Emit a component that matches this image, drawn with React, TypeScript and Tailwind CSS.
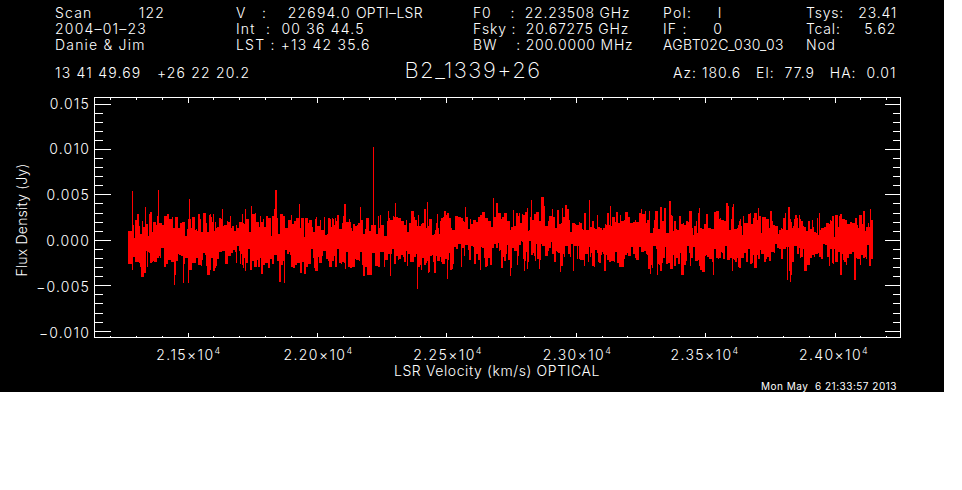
import type { ReactNode } from 'react';

const rows: ReactNode[][] = [
  [
    'Scan         122',
    <>
      V   :    22694.0 <span className="tracking-[0.3px]">OPTI–LSR</span>
    </>,
    'F0    :  22.23508 GHz',
    'Pol:     I',
    'Tsys:   23.41',
  ],
  ['2004–01–23', 'Int  :  00 36 44.5', 'Fsky :  20.67275 GHz', 'IF :     0', 'Tcal:     5.62'],
  ['Danie & Jim', 'LST : +13 42 35.6', 'BW    : 200.0000 MHz', <span className="tracking-[0.3px]">AGBT02C_030_03</span>, 'Nod'],
];

const colClasses = ['w-[181px]', 'w-[237px]', 'w-[190px] tracking-[0.8px]', 'w-[143px]', 'w-[100px] tracking-[0.8px]'];

// seeded so every render draws the same noise
const mulberry = (seed: number) => () => {
  seed = (seed + 0x6d2b79f5) | 0;
  let t = Math.imul(seed ^ (seed >>> 15), 1 | seed);
  t = (t + Math.imul(t ^ (t >>> 7), 61 | t)) ^ t;
  return ((t ^ (t >>> 14)) >>> 0) / 4294967296;
};

const upSpikes: Record<number, number> = {
  132: 191, 158: 190, 189: 199, 275: 190, 276: 190, 373: 147, 395: 203, 427: 202, 493: 198, 531: 200,
  145: 207, 222: 209, 251: 206, 299: 204, 465: 207, 610: 206, 733: 204, 870: 209,
};
const downSpikes: Record<number, number> = {
  174: 285, 183: 283, 188: 283, 284: 283, 417: 289, 447: 279, 510: 276, 650: 274, 790: 282, 787: 280, 713: 275, 560: 272,
};

const centerAt = (x: number) =>
  240 + 1.5 * Math.sin(x / 47) - 2.5 * Math.sin((x - 420) / 130) + 0.8 * Math.sin(x / 13);

const buildSpectrum = () => {
  const rand = mulberry(1339);
  const gauss = () => (rand() + rand() + rand() + rand() - 2) * 1.7;
  let d = '';
  let upper = 18;
  let lower = 18;
  let holdU = 0;
  let holdL = 0;
  for (let x = 128; x <= 872; x++) {
    const c = centerAt(x);
    // teeth stay 1-3 px wide, like the channels in the original trace
    if (holdU-- <= 0) {
      upper = Math.max(4, 20 + gauss() * 7);
      if (rand() < 0.08) upper = 5 + rand() * 6;
      holdU = Math.floor(rand() * 2.5);
    }
    if (holdL-- <= 0) {
      lower = Math.max(4, 21 + gauss() * 7);
      if (rand() < 0.08) lower = 5 + rand() * 6;
      holdL = Math.floor(rand() * 2.5);
    }
    let top = c - upper;
    let bottom = c + lower;
    if (x < 132) {
      top = c - 11;
      bottom = c + 22;
    }
    if (x > 800 && x < 840) {
      top += 2;
      bottom -= 1;
    }
    if (upSpikes[x]) top = upSpikes[x];
    if (downSpikes[x]) bottom = downSpikes[x];
    d += `M${x + 0.5} ${Math.round(top)}V${Math.round(bottom)}`;
  }
  return d;
};

const plotL = 94.5;
const plotR = 900.5;
const plotT = 97.5;
const plotB = 337.5;

const buildTicks = () => {
  let d = '';
  // x axis, top and bottom
  for (let i = -3; i <= 28; i++) {
    const x = Math.round(187.5 + i * 25.88) + 0.5;
    if (x <= plotL || x >= plotR) continue;
    const len = i % 5 === 0 ? 5 : 2;
    d += `M${x} ${plotB}v${-len}M${x} ${plotT}v${len}`;
  }
  // y axis, left and right
  for (let i = -2; i <= 26; i++) {
    const y = Math.round(103.5 + i * 9.09) + 0.5;
    if (y <= plotT || y >= plotB) continue;
    const len = i % 5 === 0 ? 16 : 8;
    d += `M${plotL} ${y}h${len}M${plotR} ${y}h${-len}`;
  }
  return d;
};

const yLabels = [
  ['0.015', 104],
  ['0.010', 149],
  ['0.005', 195],
  ['0.000', 241],
  ['−0.005', 287],
  ['−0.010', 333],
] as const;

const xLabels = [
  ['2.15', 189],
  ['2.20', 318.5],
  ['2.25', 448],
  ['2.30', 577.5],
  ['2.35', 705],
  ['2.40', 834],
] as const;

export default function App() {
  return (
    <div className="w-[962px] h-[490px] bg-white" style={{ fontFamily: '"Inter", "Liberation Sans", sans-serif' }}>
      <div className="w-[944px] h-[392px] bg-black text-white font-light text-[14px] tracking-[1.2px] flex flex-col overflow-hidden">
        <div className="h-[88px] pl-[55px] pt-[5px] shrink-0">
          <div className="flex">
            {colClasses.map((cls, col) => (
              <div key={col} className={`${cls} shrink-0`}>
                {rows.map((r, i) => (
                  <div key={i} className="h-[16px] leading-[16px] whitespace-pre">
                    {r[col]}
                  </div>
                ))}
              </div>
            ))}
          </div>
          <div className="flex items-center h-[24px] mt-[7px] whitespace-pre">
            <div className="w-[338px]">13 41 49.69   +26 22 20.2</div>
            <div className="w-[160px] pb-[4px] text-center text-[22px] font-extralight tracking-[1.5px]">B2_1339+26</div>
            <div className="ml-[120px] tracking-[1px]">Az: 180.6   El:  77.9   HA:  0.01</div>
          </div>
        </div>
        <svg width="944" height="304" viewBox="0 88 944 304" className="block shrink-0" fill="#fff">
          <path d={buildSpectrum()} stroke="#ff0000" strokeWidth="1" shapeRendering="crispEdges" fill="none" />
          <rect x={plotL} y={plotT} width={plotR - plotL} height={plotB - plotT} fill="none" stroke="#fff" shapeRendering="crispEdges" />
          <path d={buildTicks()} stroke="#fff" fill="none" shapeRendering="crispEdges" />
          <g fontSize="14" fontWeight="300">
            {yLabels.map(([t, y]) => (
              <text key={t} x="90" y={y + 5} textAnchor="end">
                {t}
              </text>
            ))}
            {xLabels.map(([t, x]) => (
              <text key={t} x={x} y="360" textAnchor="middle" className="tracking-[1.4px]">
                {t}×10
                <tspan fontSize="9" dy="-6">
                  4
                </tspan>
              </text>
            ))}
            <text x="497" y="376" textAnchor="middle" className="tracking-[0.6px]">
              LSR Velocity (km/s) OPTICAL
            </text>
            <text transform="translate(27 220) rotate(-90)" textAnchor="middle" className="tracking-[0.2px]">
              Flux Density (Jy)
            </text>
          </g>
          <text x="897" y="390" textAnchor="end" fontSize="10" fontWeight="400" className="whitespace-pre tracking-[0.5px]">
            Mon May  6 21:33:57 2013
          </text>
        </svg>
      </div>
    </div>
  );
}
